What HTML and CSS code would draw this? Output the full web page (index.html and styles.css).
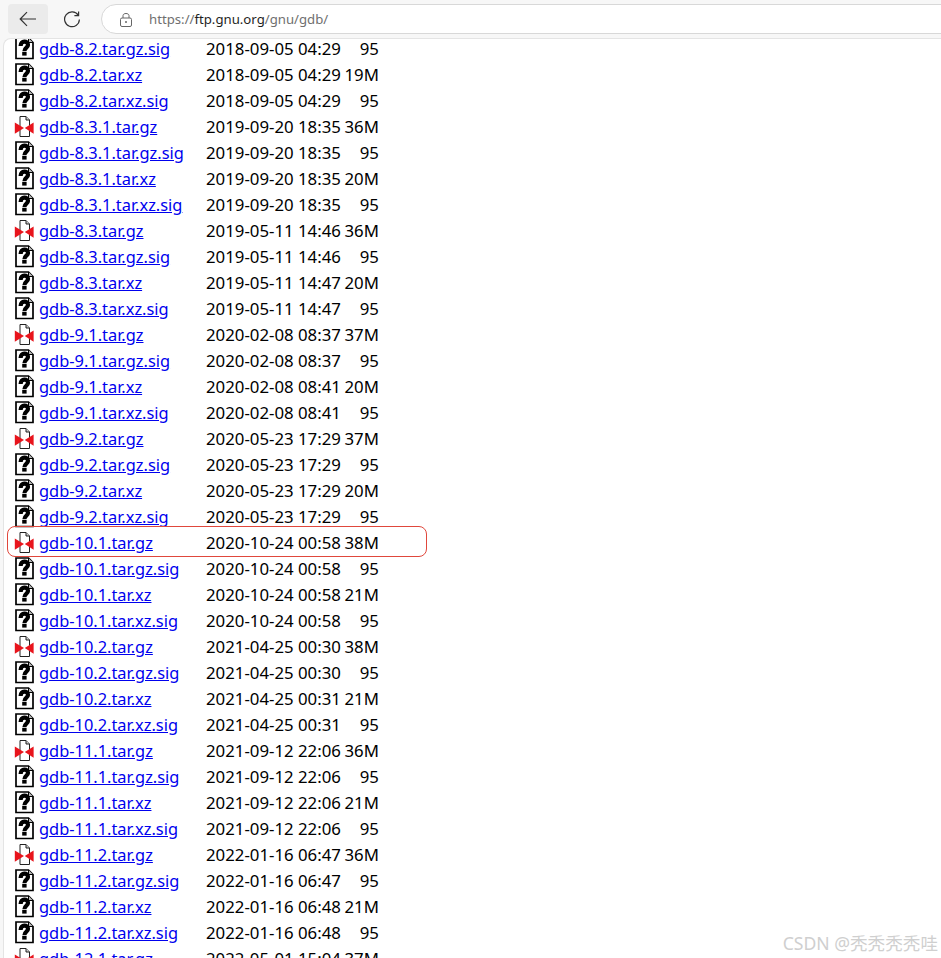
FILE: index.html
```html
<!DOCTYPE html>
<html lang="en">
<head>
<meta charset="utf-8">
<title>Index of /gnu/gdb</title>
<link rel="stylesheet" href="styles.css">
</head>
<body>
<svg class="defs" width="0" height="0" aria-hidden="true">
  <symbol id="unk" viewBox="0 0 20 24">
    <path d="M2 1H14.5L19 5.5V21.5H2Z" fill="#fff" stroke="#000" stroke-width="1.7"/>
    <path d="M14.5 1V5.5H19" fill="#bbb" stroke="#000" stroke-width="1"/>
    <path d="M6.6 9C6.6 3.4 14 3.4 14 8C14 10.8 10.4 10.4 10.4 14.2" fill="none" stroke="#000" stroke-width="4.2"/>
    <rect x="8.2" y="15" width="4.4" height="3.6" fill="#000"/>
  </symbol>
  <symbol id="zip" viewBox="0 0 20 24">
    <path d="M6 1.5H12L15.5 5V21.5H6Z" fill="#fff" stroke="#222" stroke-width="1"/>
    <path d="M12 1.5V5H15.5" fill="#ccc" stroke="#222" stroke-width="1"/>
    <path d="M0.8 7.6L10 13L0.8 18.8Z" fill="#e8141c"/>
    <path d="M19.6 7.6L10.8 13L19.6 18.8Z" fill="#e8141c"/>
  </symbol>
</svg>
<header class="bar">
  <button class="btn btn-back" aria-label="Back">
    <svg width="18" height="16" viewBox="0 0 18 16"><path d="M17 8H1.5M8 1.2L1.2 8L8 14.8" fill="none" stroke="#333" stroke-width="1.2"/></svg>
  </button>
  <button class="btn" aria-label="Reload">
    <svg width="18" height="18" viewBox="0 0 18 18"><path d="M15.2 5.2A7.4 7.4 0 1 0 16.4 9.5M15.6 1.4V5.6H11.4" fill="none" stroke="#333" stroke-width="1.2"/></svg>
  </button>
  <div class="addr">
    <svg class="lock" width="12" height="15" viewBox="0 0 12 15"><path d="M3 6V3.6C3 0.8 9 0.8 9 3.6V6" fill="none" stroke="#666"/><rect x="0.5" y="6" width="11" height="8.5" rx="1.5" fill="none" stroke="#666"/><circle cx="6" cy="10" r="1" fill="#666"/></svg>
    <span class="url">https://<b>ftp.gnu.org</b>/gnu/gdb/</span>
  </div>
</header>
<main class="page">
  <table class="list" id="list">
    <tbody>
      <tr><td class="i"><svg><use href="#unk"/></svg></td><td class="n"><a href="#">gdb-8.2.tar.gz.sig</a></td><td class="d">2018-09-05 04:29</td><td class="s">95</td></tr>
      <tr><td class="i"><svg><use href="#unk"/></svg></td><td class="n"><a href="#">gdb-8.2.tar.xz</a></td><td class="d">2018-09-05 04:29</td><td class="s">19M</td></tr>
      <tr><td class="i"><svg><use href="#unk"/></svg></td><td class="n"><a href="#">gdb-8.2.tar.xz.sig</a></td><td class="d">2018-09-05 04:29</td><td class="s">95</td></tr>
      <tr><td class="i"><svg><use href="#zip"/></svg></td><td class="n"><a href="#">gdb-8.3.1.tar.gz</a></td><td class="d">2019-09-20 18:35</td><td class="s">36M</td></tr>
      <tr><td class="i"><svg><use href="#unk"/></svg></td><td class="n"><a href="#">gdb-8.3.1.tar.gz.sig</a></td><td class="d">2019-09-20 18:35</td><td class="s">95</td></tr>
      <tr><td class="i"><svg><use href="#unk"/></svg></td><td class="n"><a href="#">gdb-8.3.1.tar.xz</a></td><td class="d">2019-09-20 18:35</td><td class="s">20M</td></tr>
      <tr><td class="i"><svg><use href="#unk"/></svg></td><td class="n"><a href="#">gdb-8.3.1.tar.xz.sig</a></td><td class="d">2019-09-20 18:35</td><td class="s">95</td></tr>
      <tr><td class="i"><svg><use href="#zip"/></svg></td><td class="n"><a href="#">gdb-8.3.tar.gz</a></td><td class="d">2019-05-11 14:46</td><td class="s">36M</td></tr>
      <tr><td class="i"><svg><use href="#unk"/></svg></td><td class="n"><a href="#">gdb-8.3.tar.gz.sig</a></td><td class="d">2019-05-11 14:46</td><td class="s">95</td></tr>
      <tr><td class="i"><svg><use href="#unk"/></svg></td><td class="n"><a href="#">gdb-8.3.tar.xz</a></td><td class="d">2019-05-11 14:47</td><td class="s">20M</td></tr>
      <tr><td class="i"><svg><use href="#unk"/></svg></td><td class="n"><a href="#">gdb-8.3.tar.xz.sig</a></td><td class="d">2019-05-11 14:47</td><td class="s">95</td></tr>
      <tr><td class="i"><svg><use href="#zip"/></svg></td><td class="n"><a href="#">gdb-9.1.tar.gz</a></td><td class="d">2020-02-08 08:37</td><td class="s">37M</td></tr>
      <tr><td class="i"><svg><use href="#unk"/></svg></td><td class="n"><a href="#">gdb-9.1.tar.gz.sig</a></td><td class="d">2020-02-08 08:37</td><td class="s">95</td></tr>
      <tr><td class="i"><svg><use href="#unk"/></svg></td><td class="n"><a href="#">gdb-9.1.tar.xz</a></td><td class="d">2020-02-08 08:41</td><td class="s">20M</td></tr>
      <tr><td class="i"><svg><use href="#unk"/></svg></td><td class="n"><a href="#">gdb-9.1.tar.xz.sig</a></td><td class="d">2020-02-08 08:41</td><td class="s">95</td></tr>
      <tr><td class="i"><svg><use href="#zip"/></svg></td><td class="n"><a href="#">gdb-9.2.tar.gz</a></td><td class="d">2020-05-23 17:29</td><td class="s">37M</td></tr>
      <tr><td class="i"><svg><use href="#unk"/></svg></td><td class="n"><a href="#">gdb-9.2.tar.gz.sig</a></td><td class="d">2020-05-23 17:29</td><td class="s">95</td></tr>
      <tr><td class="i"><svg><use href="#unk"/></svg></td><td class="n"><a href="#">gdb-9.2.tar.xz</a></td><td class="d">2020-05-23 17:29</td><td class="s">20M</td></tr>
      <tr><td class="i"><svg><use href="#unk"/></svg></td><td class="n"><a href="#">gdb-9.2.tar.xz.sig</a></td><td class="d">2020-05-23 17:29</td><td class="s">95</td></tr>
      <tr><td class="i"><svg><use href="#zip"/></svg></td><td class="n"><a href="#">gdb-10.1.tar.gz</a></td><td class="d">2020-10-24 00:58</td><td class="s">38M</td></tr>
      <tr><td class="i"><svg><use href="#unk"/></svg></td><td class="n"><a href="#">gdb-10.1.tar.gz.sig</a></td><td class="d">2020-10-24 00:58</td><td class="s">95</td></tr>
      <tr><td class="i"><svg><use href="#unk"/></svg></td><td class="n"><a href="#">gdb-10.1.tar.xz</a></td><td class="d">2020-10-24 00:58</td><td class="s">21M</td></tr>
      <tr><td class="i"><svg><use href="#unk"/></svg></td><td class="n"><a href="#">gdb-10.1.tar.xz.sig</a></td><td class="d">2020-10-24 00:58</td><td class="s">95</td></tr>
      <tr><td class="i"><svg><use href="#zip"/></svg></td><td class="n"><a href="#">gdb-10.2.tar.gz</a></td><td class="d">2021-04-25 00:30</td><td class="s">38M</td></tr>
      <tr><td class="i"><svg><use href="#unk"/></svg></td><td class="n"><a href="#">gdb-10.2.tar.gz.sig</a></td><td class="d">2021-04-25 00:30</td><td class="s">95</td></tr>
      <tr><td class="i"><svg><use href="#unk"/></svg></td><td class="n"><a href="#">gdb-10.2.tar.xz</a></td><td class="d">2021-04-25 00:31</td><td class="s">21M</td></tr>
      <tr><td class="i"><svg><use href="#unk"/></svg></td><td class="n"><a href="#">gdb-10.2.tar.xz.sig</a></td><td class="d">2021-04-25 00:31</td><td class="s">95</td></tr>
      <tr><td class="i"><svg><use href="#zip"/></svg></td><td class="n"><a href="#">gdb-11.1.tar.gz</a></td><td class="d">2021-09-12 22:06</td><td class="s">36M</td></tr>
      <tr><td class="i"><svg><use href="#unk"/></svg></td><td class="n"><a href="#">gdb-11.1.tar.gz.sig</a></td><td class="d">2021-09-12 22:06</td><td class="s">95</td></tr>
      <tr><td class="i"><svg><use href="#unk"/></svg></td><td class="n"><a href="#">gdb-11.1.tar.xz</a></td><td class="d">2021-09-12 22:06</td><td class="s">21M</td></tr>
      <tr><td class="i"><svg><use href="#unk"/></svg></td><td class="n"><a href="#">gdb-11.1.tar.xz.sig</a></td><td class="d">2021-09-12 22:06</td><td class="s">95</td></tr>
      <tr><td class="i"><svg><use href="#zip"/></svg></td><td class="n"><a href="#">gdb-11.2.tar.gz</a></td><td class="d">2022-01-16 06:47</td><td class="s">36M</td></tr>
      <tr><td class="i"><svg><use href="#unk"/></svg></td><td class="n"><a href="#">gdb-11.2.tar.gz.sig</a></td><td class="d">2022-01-16 06:47</td><td class="s">95</td></tr>
      <tr><td class="i"><svg><use href="#unk"/></svg></td><td class="n"><a href="#">gdb-11.2.tar.xz</a></td><td class="d">2022-01-16 06:48</td><td class="s">21M</td></tr>
      <tr><td class="i"><svg><use href="#unk"/></svg></td><td class="n"><a href="#">gdb-11.2.tar.xz.sig</a></td><td class="d">2022-01-16 06:48</td><td class="s">95</td></tr>
      <tr><td class="i"><svg><use href="#zip"/></svg></td><td class="n"><a href="#">gdb-12.1.tar.gz</a></td><td class="d">2022-05-01 15:04</td><td class="s">37M</td></tr>
    </tbody>
  </table>
  <div class="mark"></div>
</main>
<div class="wm">CSDN @秃秃秃秃哇</div>
</body>
</html>
```
FILE: styles.css
```css
html, body {
  margin: 0;
  height: 100%;
  overflow: hidden;
  background: #f7f7f7;
  font-family: "Noto Sans", "Noto Sans CJK SC", sans-serif;
}
body {
  display: flex;
  flex-direction: column;
  height: 958px;
  position: relative;
}
.defs { position: absolute; }
.bar {
  flex: 0 0 38px;
  height: 38px;
  display: flex;
  align-items: flex-start;
  padding: 4px 0 0 8px;
  box-sizing: border-box;
  gap: 0;
  position: relative;
  z-index: 1;
}
.btn {
  width: 40px;
  height: 30px;
  margin-right: 4px;
  border: 0;
  border-radius: 4px;
  background: transparent;
  padding: 0;
  display: flex;
  align-items: center;
  justify-content: center;
}
.btn-back { background: #ebebeb; }
.addr {
  flex: 1;
  height: 30px;
  margin-left: 5px;
  margin-right: -20px;
  background: #fff;
  border: 1px solid #d8d8d8;
  border-radius: 16px;
  box-sizing: border-box;
  display: flex;
  align-items: center;
  padding-left: 18px;
  gap: 17px;
}
.url {
  font-size: 13.2px;
  color: #6f6f6f;
  white-space: nowrap;
}
.url b { font-weight: 400; color: #1f1f1f; }
.page {
  flex: 1;
  margin-left: 3px;
  background: #fff;
  border-left: 1px solid #e4e4e4;
  border-top: 1px solid #e4e4e4;
  border-top-left-radius: 8px;
  overflow: hidden;
  position: relative;
  min-height: 0;
}
.list {
  border-collapse: collapse;
  margin: -3px 0 0 10px;
  font-size: 16.8px;
  color: #000;
}
.list td { padding: 0; height: 26px; line-height: 26px; white-space: nowrap; }
.i { width: 25px; }
.i svg { display: block; width: 20px; height: 24px; }
.n { width: 167px; font-size: 16.4px; }
.n a { color: #00e; text-decoration: underline; }
.s { width: 38px; text-align: right; }
.mark {
  position: absolute;
  left: 3px;
  top: 487px;
  width: 420px;
  height: 31px;
  border: 1px solid #e0473c;
  border-radius: 8px;
  box-sizing: border-box;
}
.wm {
  position: absolute;
  right: 3px;
  bottom: 3px;
  font-size: 17.6px;
  color: #cfcfcf;
  white-space: nowrap;
}
```
